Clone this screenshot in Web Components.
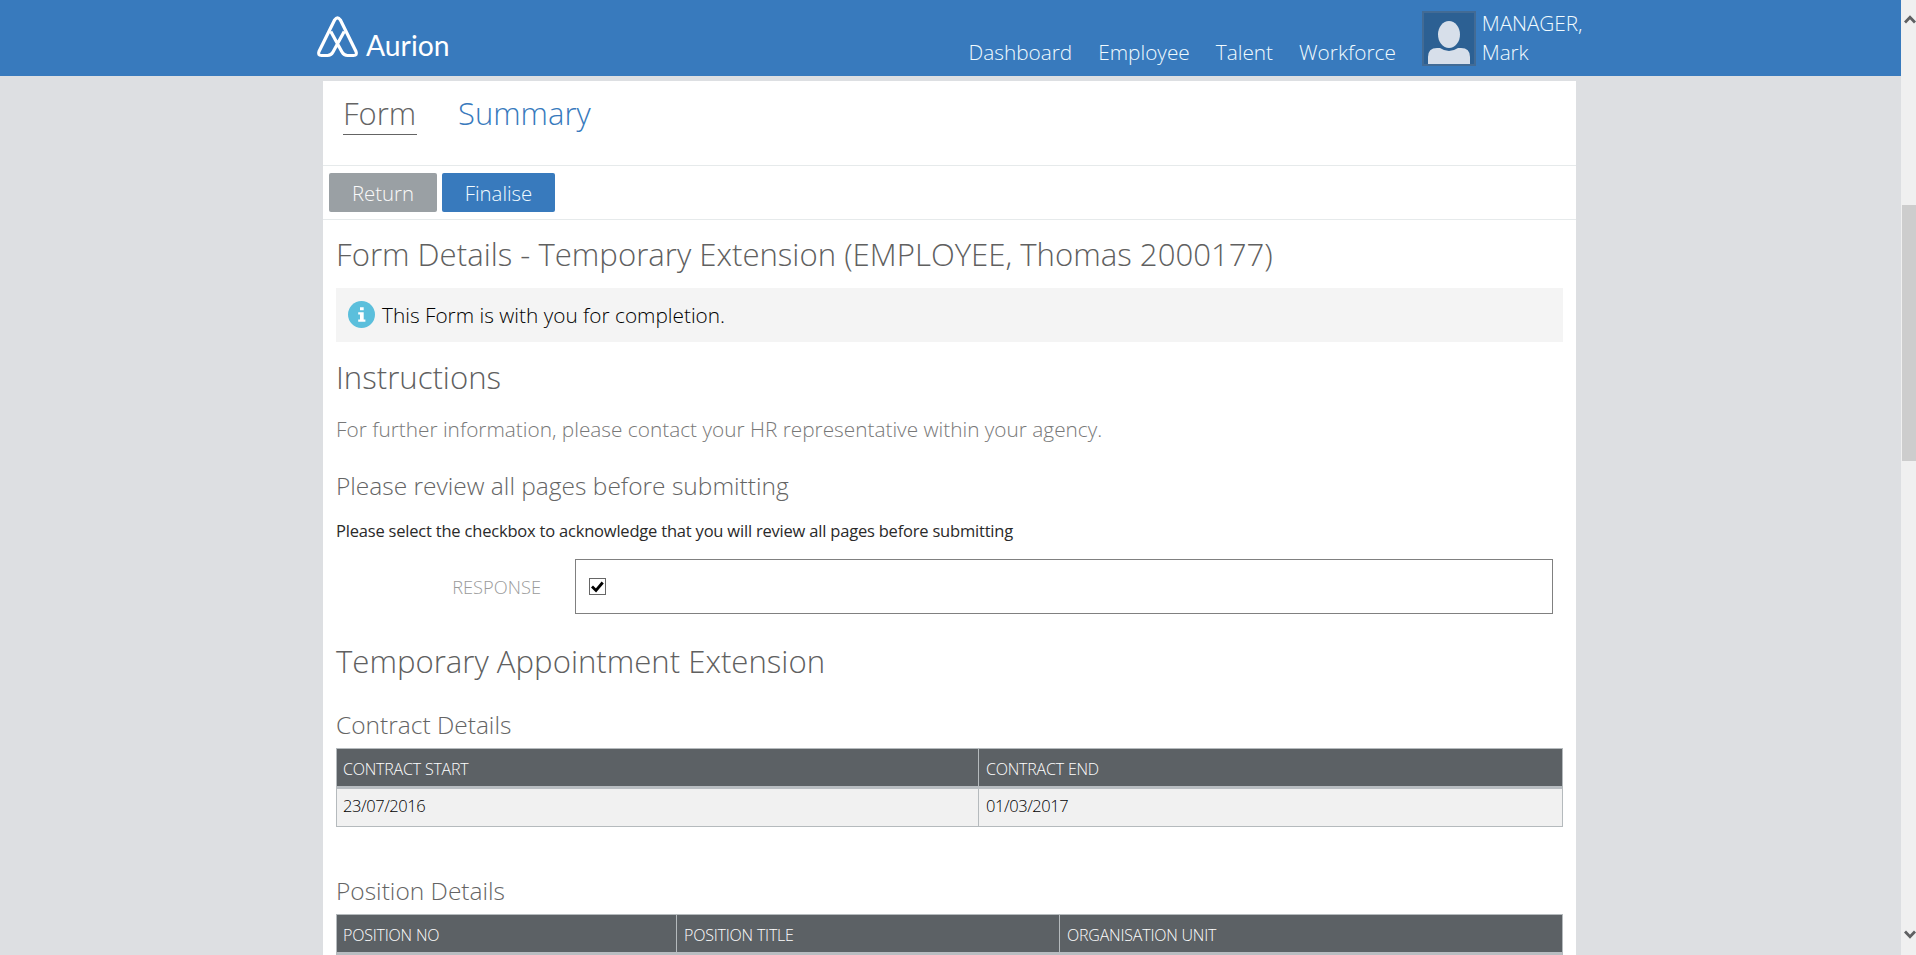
<!DOCTYPE html>
<html lang="en">
<head>
<meta charset="utf-8">
<title>Aurion - Form</title>
<style>
html,body{margin:0;height:100%;overflow:hidden}
body{font-family:"Open Sans","Noto Sans",sans-serif;font-weight:300;font-size:20.8px;color:#000}
</style>
</head>
<body>
<app-shell>
  <app-header slot="header">
    <nav-link>Dashboard</nav-link><nav-link>Employee</nav-link><nav-link>Talent</nav-link><nav-link>Workforce</nav-link>
    <user-badge slot="user">MANAGER,<br>Mark</user-badge>
  </app-header>
  <form-panel>
    <tab-link slot="tabs" active>Form</tab-link>
    <tab-link slot="tabs">Summary</tab-link>
    <action-button slot="actions" kind="muted" style="width:108px">Return</action-button>
    <action-button slot="actions" style="width:113px">Finalise</action-button>
    <section-title style="margin-top:14px">Form Details - Temporary Extension (EMPLOYEE, Thomas 2000177)</section-title>
    <info-banner>This Form is with you for completion.</info-banner>
    <section-title style="margin-top:15px">Instructions</section-title>
    <help-text>For further information, please contact your HR representative within your agency.</help-text>
    <sub-title style="margin-top:26px">Please review all pages before submitting</sub-title>
    <help-text small>Please select the checkbox to acknowledge that you will review all pages before submitting</help-text>
    <check-field label="RESPONSE"></check-field>
    <section-title style="margin-top:27px">Temporary Appointment Extension</section-title>
    <sub-title style="margin-top:27px">Contract Details</sub-title>
    <data-table cols="641px 1fr" heads="CONTRACT START|CONTRACT END" row="23/07/2016|01/03/2017"></data-table>
    <sub-title style="margin-top:47px">Position Details</sub-title>
    <data-table cols="339px 383px 1fr" heads="POSITION NO|POSITION TITLE|ORGANISATION UNIT" row="||"></data-table>
  </form-panel>
</app-shell>
<script>
const define = (name, html, setup) => customElements.define(name, class extends HTMLElement {
  constructor() {
    super();
    const t = document.createElement('template');
    t.innerHTML = html;
    this.attachShadow({mode: 'open'}).append(t.content.cloneNode(true));
  }
  connectedCallback() { if (setup) setup(this, this.shadowRoot); }
});

define('scroll-rail', `<style>
:host{display:flex;flex-direction:column;width:15px;height:100%;background:#f0f0f0;box-sizing:border-box;padding:14px 0 15px 1px}
svg{display:block;margin-left:2px;flex:none}
.thumb{height:256px;margin:180px 0 auto;background:#cdcdcd}
</style>
<svg width="12" height="11" viewBox="0 0 12 11"><path d="M1 8.5L6 3.2L11 8.5" fill="none" stroke="#5f6062" stroke-width="2.8"/></svg>
<div class="thumb"></div>
<svg width="12" height="11" viewBox="0 0 12 11"><path d="M1 2.5L6 7.8L11 2.5" fill="none" stroke="#5f6062" stroke-width="2.8"/></svg>`);

define('app-shell', `<style>
:host{display:flex;height:100vh;overflow:hidden;background:#dddfe2}
main{flex:1;min-width:0;overflow:hidden}
</style><main><slot name="header"></slot><slot></slot></main><scroll-rail></scroll-rail>`);

define('brand-logo', `<style>
:host{display:flex;align-items:flex-start;color:#fff;width:137px;flex:none}
svg{display:block;margin-top:14px;flex:none}
span{font:400 28.3px/34px Lato,"Open Sans",sans-serif;margin:28px 0 0 6px}
</style>
<svg width="45" height="45" viewBox="0 0 45 45" fill="none" stroke="#fff" stroke-width="3.2" stroke-linejoin="round"><path d="M15.8 17.5L27 38Q29 41.5 32.5 41.5H38.5Q42.5 41.5 41 37.5L25.3 5.8Q22.5 1.8 19.7 5.8L4 37.5Q2.5 41.5 6.5 41.5H12.5Q16 41.5 18 38L29.2 17.5"/></svg>
<span>Aurion</span>`);

define('app-header', `<style>
:host{display:flex;height:76px;background:#387abd;color:#f1fbff;padding-left:315px;box-sizing:border-box}
nav{display:flex;gap:26px;align-items:flex-end;padding-bottom:9px;margin-left:516.5px}
::slotted(user-badge){margin-left:26px}
</style><brand-logo></brand-logo><nav><slot></slot></nav><slot name="user"></slot>`);

define('nav-link', `<style>:host{display:block;line-height:29px;white-space:nowrap}</style><slot></slot>`);

define('user-badge', `<style>
:host{display:flex;align-items:flex-start;gap:6px;line-height:29px}
svg{display:block;margin-top:11px}
div{margin-top:9px;white-space:nowrap;letter-spacing:-.1px}
</style>
<svg width="54" height="55" viewBox="0 0 54 55"><rect x="1" y="1" width="52" height="53" fill="#2c6093" stroke="#426b95" stroke-width="2"/><path d="M6 53V46Q6 37 15 37H18Q27 43 36 37H39Q48 37 48 46V53Z" fill="#d7dfea"/><ellipse cx="27" cy="23.5" rx="11" ry="13.5" fill="#d7dfea"/></svg>
<div><slot></slot></div>`);

define('tab-link', `<style>
:host{display:block;font-size:31px;line-height:40px;height:41px;color:#387abd}
:host([active]){color:#646464;border-bottom:1px solid #646464;width:74px}
</style><slot></slot>`);

define('action-button', `<style>
:host{display:flex;align-items:center;justify-content:center;height:39px;border-radius:2px;background:#387abd;color:#f1fbff;font-size:20.4px}
:host([kind=muted]){background:#9aa0a4;color:#fafafa}
</style><slot></slot>`);

define('form-panel', `<style>
:host{display:block;width:1253px;margin:5px 0 0 323px;background:#fff;min-height:874px}
.tabs{display:flex;align-items:flex-start;gap:41px;padding:12px 20px 0;box-sizing:border-box;border-bottom:1px solid #e6eaeb;height:85px}
.bar{display:flex;gap:5px;height:54px;padding:7px 6px 0;box-sizing:border-box;border-bottom:1px solid #e6eaeb}
.body{display:flex;flex-direction:column;padding:0 13px}
</style>
<div class="tabs"><slot name="tabs"></slot></div>
<div class="bar"><slot name="actions"></slot></div>
<div class="body"><slot></slot></div>`);

define('section-title', `<style>:host{display:block;font-size:31.15px;line-height:40px;color:#606060;white-space:nowrap}</style><slot></slot>`);
define('sub-title', `<style>:host{display:block;font-size:24.5px;line-height:34px;height:33px;color:#646464;white-space:nowrap}</style><slot></slot>`);

define('help-text', `<style>
:host{display:block;line-height:28px;margin-top:18px;color:#787878;white-space:nowrap}
:host([small]){font-size:16.5px;letter-spacing:-.2px;font-weight:400;line-height:24px;height:23px;margin-top:17px;color:#2a2a2a}
</style><slot></slot>`);

define('info-banner', `<style>
:host{display:flex;align-items:center;height:54px;margin-top:14px;padding-left:12px;background:#f4f4f4}
svg{display:block;margin:-2px 7px 0 0}
</style>
<svg width="27" height="27" viewBox="0 0 27 27"><circle cx="13.5" cy="13.5" r="13.5" fill="#5bbfdc"/><path d="M12 6.2H15.7V9.3H12ZM10.2 11.3H15.7V18.5H17.4V20.8H10.2V18.5H12V13.6H10.2Z" fill="#fff"/></svg>
<slot></slot>`);

define('check-field', `<style>
:host{display:grid;grid-template-columns:205px 978px;column-gap:34px;height:55px;margin-top:17px}
label{text-align:right;line-height:55px;font-size:18.3px;color:#9a9a9a}
.box{display:flex;align-items:center;border:1px solid #808080;box-sizing:border-box;padding-left:13px}
svg{display:block}
</style>
<label></label><div class="box"><svg width="17" height="17" viewBox="0 0 17 17"><rect x=".5" y=".5" width="16" height="16" fill="#fff" stroke="#666"/><path d="M3 8.5L7 12.5L13.7 4.5" fill="none" stroke="#000" stroke-width="2.8"/></svg></div>`,
(el, root) => { root.querySelector('label').textContent = el.getAttribute('label'); });

define('data-table', `<style>
:host{display:block;border:1px solid #b5babd;margin-top:7px}
.r{display:grid;box-sizing:border-box}
.r>div{padding-left:7px;border-left:1px solid #b5babd}
.r>div:first-child{border-left:0;padding-left:6px}
.h{height:40px;background:#5c6165;color:#fff;border-bottom:3px solid #b8bdc1;line-height:41px;font-size:16px;letter-spacing:-.2px}
.h>div{height:37px}
.d{height:37px;background:#f1f1f1;line-height:33px;font-size:16.5px;letter-spacing:-.43px}
</style><div class="r h"></div><div class="r d"></div>`,
(el, root) => {
  for (const [cls, attr] of [['.h', 'heads'], ['.d', 'row']]) {
    const r = root.querySelector(cls);
    r.style.gridTemplateColumns = el.getAttribute('cols');
    r.replaceChildren(...el.getAttribute(attr).split('|').map(x => {
      const c = document.createElement('div');
      c.textContent = x;
      return c;
    }));
  }
});
</script>
</body>
</html>
